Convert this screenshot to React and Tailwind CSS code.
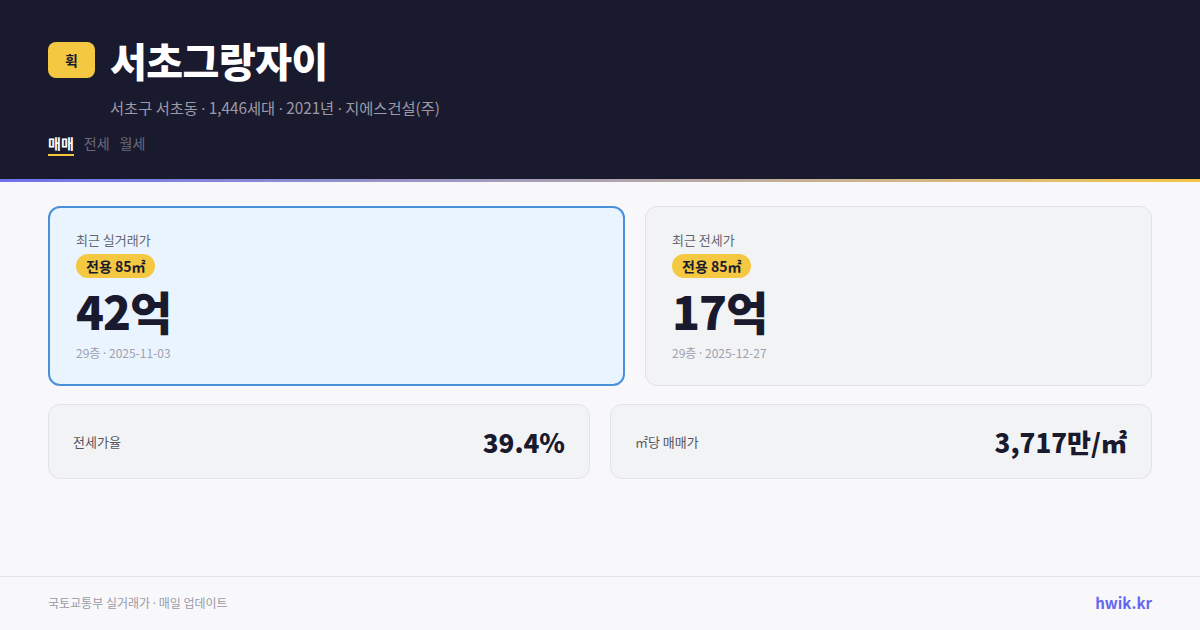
const Dot = () => <span style={{ fontFamily: '"Noto Sans", sans-serif' }}>·</span>;

export default function App() {
  const font = { fontFamily: '"Noto Sans CJK KR", "Noto Sans", sans-serif' };
  return (
    <div style={font} className="w-[1200px] h-[630px] flex flex-col bg-[#f8f8fa] overflow-hidden">
      <header className="bg-[#1a1a2e] h-[179px] px-12 pt-[36px] flex flex-col">
        <div className="flex items-center gap-[15px]">
          <div className="w-[47px] h-[36px] rounded-[8px] bg-[#f5c842] flex items-center justify-center text-[#1a1a2e] text-[14px] font-bold">휙</div>
          <h1 className="text-white text-[40px] leading-[48px] font-black tracking-[-0.5px]">서초그랑자이</h1>
        </div>
        <div className="mt-[13px] pl-[62px] text-[15.3px] leading-[20px] text-[#9a9aa8]">서초구 서초동 <Dot /> 1,446세대 <Dot /> 2021년 <Dot /> 지에스건설(주)</div>
        <div className="mt-[15px] flex gap-[10px] text-[14px] leading-[20px]">
          <div className="text-white font-bold border-b-2 border-[#f5c842] pb-[1px]">매매</div>
          <div className="text-[#6b6b7b]">전세</div>
          <div className="text-[#6b6b7b]">월세</div>
        </div>
      </header>
      <div className="h-[3px] bg-gradient-to-r from-[#7070ee] to-[#f5c542]" />
      <main className="flex-1 px-12 pt-[24px] flex flex-col gap-[18px]">
        <div className="grid grid-cols-[577px_507px] gap-5">
          <div className="h-[180px] rounded-[12px] border-2 border-[#4a90d9] bg-[#eaf4fe] pl-[26px] pt-[23px]">
            <div className="text-[13px] leading-[18px] text-[#666670]">최근 실거래가</div>
            <div className="mt-[5px] inline-block rounded-full bg-[#f5c842] px-[10px] text-[14px] leading-[24px] font-bold text-[#1a1a2e]">전용 85㎡</div>
            <div className="mt-[2px] text-[46px] leading-[60px] font-black text-[#1a1a2e] tracking-[-1px]">42억</div>
            <div className="mt-[4px] text-[12px] leading-[18px] text-[#a0a0ae]">29층 <Dot /> 2025-11-03</div>
          </div>
          <div className="h-[180px] rounded-[12px] border border-[#e2e3e6] bg-[#f2f3f5] pl-[26px] pt-[24px]">
            <div className="text-[13px] leading-[18px] text-[#666670]">최근 전세가</div>
            <div className="mt-[5px] inline-block rounded-full bg-[#f5c842] px-[10px] text-[14px] leading-[24px] font-bold text-[#1a1a2e]">전용 85㎡</div>
            <div className="mt-[2px] text-[46px] leading-[60px] font-black text-[#1a1a2e] tracking-[-1px]">17억</div>
            <div className="mt-[4px] text-[12px] leading-[18px] text-[#a0a0ae]">29층 <Dot /> 2025-12-27</div>
          </div>
        </div>
        <div className="grid grid-cols-2 gap-5">
          <div className="h-[75px] rounded-[12px] border border-[#e2e3e6] bg-[#f2f3f5] px-6 flex items-center justify-between">
            <div className="text-[13px] text-[#555560]">전세가율</div>
            <div className="text-[26px] font-black text-[#1a1a2e]">39.4%</div>
          </div>
          <div className="h-[75px] rounded-[12px] border border-[#e2e3e6] bg-[#f2f3f5] px-6 flex items-center justify-between">
            <div className="text-[13px] text-[#555560]">㎡당 매매가</div>
            <div className="text-[26px] font-black text-[#1a1a2e]">3,717만/㎡</div>
          </div>
        </div>
      </main>
      <footer className="h-[54px] border-t border-[#e4e4e8] px-12 flex items-center justify-between">
        <div className="text-[12px] text-[#9a9aa6]">국토교통부 실거래가 <Dot /> 매일 업데이트</div>
        <div className="text-[15px] font-bold text-[#6366f1]">hwik.kr</div>
      </footer>
    </div>
  );
}
